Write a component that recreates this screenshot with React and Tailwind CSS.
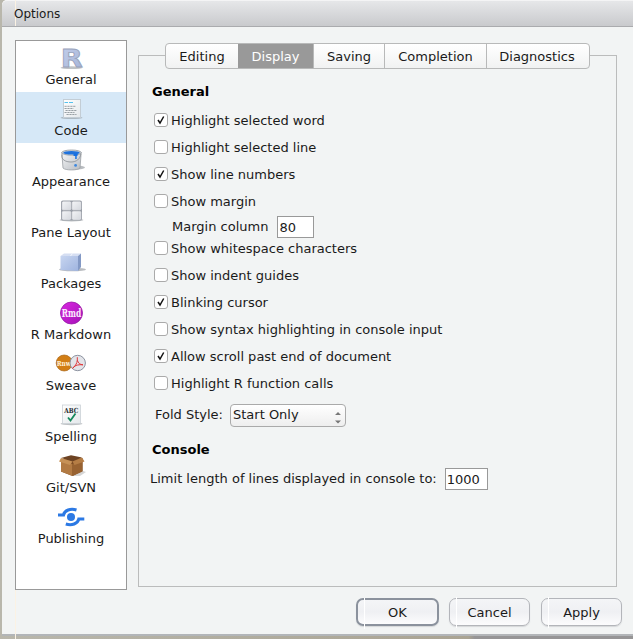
import React from 'react';

const Shadow = ({ y = 22, rx = 11 }) => <ellipse cx="16.5" cy={y} rx={rx} ry="1.4" fill="#8a8f96" opacity="0.55" />;

const icons = {
  General: (
    <>
      <Shadow y={21.7} />
      <text x="16.700" y="21" textAnchor="middle" fontSize="25.500" fontWeight="bold" fontFamily="DejaVu Sans" textLength="22" lengthAdjust="spacingAndGlyphs" fill="url(#rFill)" stroke="#97a1ba" strokeWidth=".8">R</text>
    </>
  ),
  Code: (
    <>
      <Shadow y={20.7} />
      <rect x="8.5" y="2.5" width="17" height="18" fill="url(#paper)" stroke="#c3cdd5" />
      <path d="M9.5 5.5h3.500M14 5.5h4" stroke="#55c1ee" strokeWidth="1.2" />
      <path d="M9.5 9.3h11M9.5 11.5h9M10.5 13.5h11M9.5 15.5h10M11.5 17.5h10" stroke="#8d959b" strokeWidth=".9" strokeDasharray="2.2 .7" />
    </>
  ),
  Appearance: (
    <>
      <ellipse cx="20" cy="19.500" rx="10" ry="2.200" fill="#8a8f96" opacity="0.6" />
      <path d="M6.800 4.500 8 20c2 2.600 15 2.600 17 0l1.200-15.5z" fill="url(#metal)" stroke="#9a9fa5" strokeWidth=".8" />
      <ellipse cx="16.500" cy="4.600" rx="9.700" ry="2.600" fill="#d5dade" stroke="#8f959c" strokeWidth=".8" />
      <ellipse cx="16.500" cy="4.800" rx="8.200" ry="1.800" fill="#1f72dc" />
      <path d="M18.500 5.500h4.200v2l-1 .6v3h-1.500V8h-1.700z" fill="#1670e2" />
      <circle cx="20.600" cy="17.400" r="1.400" fill="#3d87df" />
      <path d="M7 6.500c-1.200 5 3.500 7.500 9 7.500s9.200-3 9.800-8" fill="none" stroke="#8a8f94" strokeWidth=".8" />
    </>
  ),
  'Pane Layout': (
    <>
      <Shadow y={21} rx={12} />
      <rect x="6" y="1.500" width="21" height="20" rx="1.800" fill="#9a9fa8" />
      <g fill="url(#pane)" stroke="#f4f5f6" strokeWidth=".5">
        <rect x="7.300" y="2.800" width="8.500" height="8" rx="1" />
        <rect x="17.300" y="2.800" width="8.500" height="8" rx="1" />
        <rect x="7.300" y="12.400" width="8.500" height="8" rx="1" />
        <rect x="17.300" y="12.400" width="8.500" height="8" rx="1" />
      </g>
    </>
  ),
  Packages: (
    <>
      <ellipse cx="17.500" cy="19.500" rx="13.500" ry="1.800" fill="#8a8f96" opacity="0.6" />
      <path d="M5.500 6H23v15L5.500 20z" fill="url(#cube)" />
      <path d="M5.500 6 9 3.500h17L23 6z" fill="#d5def2" />
      <path d="m23 6 3-2.500v13.500l-3 4z" fill="#8399c5" />
      <path d="m17.500 3.500-2 2.500" stroke="#f4f7fd" />
    </>
  ),
  'R Markdown': (
    <>
      <circle cx="16.500" cy="12" r="11" fill="url(#rmd)" stroke="#951ba4" strokeWidth=".8" />
      <text x="16.500" y="16" textAnchor="middle" fontSize="11" fontWeight="bold" fontFamily="DejaVu Serif" textLength="19.500" lengthAdjust="spacingAndGlyphs" fill="#fbe9fd">Rmd</text>
    </>
  ),
  Sweave: (
    <>
      <circle cx="9.200" cy="11" r="8" fill="#d27e15" stroke="#a7671c" strokeWidth=".7" />
      <text x="8.800" y="13.800" textAnchor="middle" fontSize="8" fontWeight="bold" fontFamily="DejaVu Serif" textLength="14" lengthAdjust="spacingAndGlyphs" fill="#fff0d6">Rnw</text>
      <circle cx="22.700" cy="11" r="7.700" fill="#e3e4e9" stroke="#8d93a1" />
      <path d="M22.300 5.200v3c0 3-2.800 7-4.800 8.100 1.600-2.200 4.500-4 10.500-3.500-3 0-4.800-1.800-5.700-4.600" fill="none" stroke="#e0383b" strokeWidth="1" />
    </>
  ),
  Spelling: (
    <>
      <Shadow y={20.800} rx={11} />
      <rect x="7.500" y="2" width="18" height="18.500" fill="url(#paper)" stroke="#cbd1d6" strokeWidth=".8" />
      <text x="16.300" y="10" textAnchor="middle" fontSize="7" fontWeight="bold" fontFamily="DejaVu Serif" textLength="14" lengthAdjust="spacingAndGlyphs" fill="#252c2f">ABC</text>
      <path d="m13 14.500 2.500 3L20.500 10.500" fill="none" stroke="#16895d" strokeWidth="1.800" />
    </>
  ),
  'Git/SVN': (
    <>
      <path d="M17 22h8l6-4-6-2z" fill="#888" opacity=".35" />
      <path d="M6 5v12.500L17.500 22 27.500 17V4z" fill="#7b4c25" />
      <path d="M6 7 17.500 10v12L6 17.500z" fill="#b27a43" />
      <path d="M17.500 10 27.500 7v10.500l-10 4.500z" fill="#986231" />
      <path d="M6 4 16 1.300 27 3.500 17.500 7.500z" fill="#6d4323" />
      <path d="M6 4 4 7.500 15 11l2.500-3.500z" fill="#c69157" />
      <path d="M17.500 7.500 27 3.500l2.500 4L19.500 11z" fill="#b57d45" />
    </>
  ),
  Publishing: (
    <g fill="none" stroke="#2c79e4" strokeWidth="3.100">
      <circle cx="16" cy="12" r="4" fill="#2c79e4" stroke="none" />
      <path d="M3 10h5.500c1-4.800 7-6.800 13-5" />
      <path d="M29.300 14h-5.500c-1 4.800-7 6.800-13 5" />
    </g>
  ),
};

const Gradient = ({ id, from, to }) => (
  <linearGradient id={id} x1="0" y1="0" x2="1" y2="1"><stop stopColor={from} /><stop offset="1" stopColor={to} /></linearGradient>
);

const Nav = ({ name }) => (
  <div className={`flex h-[51px] flex-col items-center pt-[5px] ${name === 'Code' ? 'bg-[#d6e8f7]' : ''}`}>
    <svg className="h-6 w-8 shrink-0 overflow-visible" viewBox="0 0 32 24">{icons[name]}</svg>
    <span className="mt-px leading-[18px] whitespace-nowrap">{name}</span>
  </div>
);

const Check = ({ label, on }) => (
  <div className="flex h-[27px] items-center gap-[3px] pl-[15px]">
    <span className="mb-[2px] h-[14px] w-[14px] shrink-0 rounded-[3px] border border-[#aaa] bg-white">
      {on && <svg className="h-3 w-3" viewBox="0 0 12 12"><path d="m3 6 2 3 3.700-6.500" fill="none" stroke="#111" strokeWidth="1.500" /></svg>}
    </span>
    <span>{label}</span>
  </div>
);

const Button = ({ label, main }) => (
  <div className={`relative flex items-center justify-center rounded-[7px] bg-linear-to-b from-[#f4f5f7] via-[#eff0f3] to-[#fcfcfd] pt-[2px] shadow-[0_1px_1px_#d5d7d9] ${main ? 'h-[28px] w-[83px] border-2 border-[#8b929d]' : 'h-[28px] w-[81px] border border-[#b3b5ba]'}`}>
    {label}
    <span className="absolute -top-[2px] left-[6px] h-[31px] w-px bg-white" />
  </div>
);

const tabs = [
  ['Editing', 'w-[72px]'],
  ['Display', 'w-[75px]'],
  ['Saving', 'w-[71px]'],
  ['Completion', 'w-[102px]'],
  ['Diagnostics', 'w-[103px]'],
];

export default function App() {
  return (
    <div className="relative h-[639px] w-[633px] overflow-hidden bg-[linear-gradient(90deg,#b9b7ac,#aaa493_74%,#969596_75%,#969596)] pl-[2px] text-[13px] leading-[16px] text-[#1a1a1a] [font-family:'DejaVu_Sans',sans-serif]">
      <svg className="absolute h-0 w-0">
        <defs>
          <Gradient id="rFill" from="#c5d0eb" to="#a3b1d6" />
          <Gradient id="paper" from="#ffffff" to="#e4e8eb" />
          <Gradient id="metal" from="#f5f6f7" to="#b8bcc2" />
          <Gradient id="pane" from="#f3f4f6" to="#d5d8de" />
          <Gradient id="cube" from="#c7d5f0" to="#9fb4df" />
          <Gradient id="rmd" from="#d928e1" to="#a511b8" />
        </defs>
      </svg>
      <div className="flex h-[636px] flex-col rounded-tl-[5px] border-b-2 border-[#b2b5b8] bg-[#f2f4f4]">
        <header className="h-[27px] shrink-0 rounded-tl-[5px] border-t border-b border-t-[#f4f4f5] border-b-[#aaabae] bg-linear-to-b from-[#e6e7e9] to-[#c9cacd] pt-[5px] pl-[12px] text-[12px]"><span className="relative z-10">Options</span></header>
        <div className="flex pt-[13px] pl-[13px]">
          <nav className="h-[550px] w-[112px] shrink-0 border border-[#999] bg-white">
            {Object.keys(icons).map((name) => <Nav key={name} name={name} />)}
          </nav>
          <main className="mt-[15px] ml-[11px] h-[532px] w-[479px] border border-[#bbbcbc]">
            <div className="-mt-[13px] ml-[26px] flex h-[26px] w-[425px] overflow-hidden rounded-[4px] border border-[#b8b9b9] bg-linear-to-b from-white to-[#f1f2f2]">
              {tabs.map(([name, width], i) => (
                <div key={name} className={`flex shrink-0 items-center justify-center pt-px ${width} ${name === 'Display' ? 'bg-[#999] text-white' : ''} ${i > 1 ? 'border-l border-[#b8b9b9]' : ''} ${i === 4 ? 'pr-[2px]' : ''}`}>{name}</div>
              ))}
            </div>
            <h2 className="mt-[15px] mb-[7px] pl-[13px] font-bold text-black">General</h2>
            <Check label="Highlight selected word" on />
            <Check label="Highlight selected line" />
            <Check label="Show line numbers" on />
            <Check label="Show margin" />
            <div className="flex h-[20px] items-center pt-[3px] pl-[33px]">
              Margin column<span className="ml-[9px] h-[22px] w-[37px] border border-[#999] bg-white pt-[3px] pl-[1px]">80</span>
            </div>
            <Check label="Show whitespace characters" />
            <Check label="Show indent guides" />
            <Check label="Blinking cursor" on />
            <Check label="Show syntax highlighting in console input" />
            <Check label="Allow scroll past end of document" on />
            <Check label="Highlight R function calls" />
            <div className="mt-[6px] flex h-[24px] items-center pl-[16px]">
              Fold Style:
              <span className="ml-[7px] flex h-[23px] w-[116px] items-center justify-between rounded-[4px] border border-[#aaa] bg-linear-to-b from-white to-[#eee] pr-[4px] pl-[2px]">
                Start Only
                <svg className="mt-[5px] h-[13px] w-[6px]" viewBox="0 0 6 13"><path d="m0 4 3-3 3 3zM0 9.500l3 3 3-3z" fill="#777" /></svg>
              </span>
            </div>
            <h2 className="mt-[15px] pl-[13px] font-bold text-black">Console</h2>
            <div className="mt-[10px] flex h-[22px] items-center pl-[11px] whitespace-nowrap">
              Limit length of lines displayed in console to:
              <span className="ml-[8px] h-[22px] w-[43px] border border-[#999] bg-white pt-[3px] pl-[1px]">1000</span>
            </div>
          </main>
        </div>
        <footer className="mt-[8px] flex justify-end gap-[10px] pr-[11px]">
          <Button label="OK" main />
          <Button label="Cancel" />
          <div className="ml-px"><Button label="Apply" /></div>
        </footer>
      </div>
      <span className="absolute top-0 left-[15px] h-[26px] w-px bg-[#fbf2e4]" />
      <span className="absolute top-[590px] left-[15px] h-[49px] w-px bg-[#fbf2e4]" />
    </div>
  );
}
